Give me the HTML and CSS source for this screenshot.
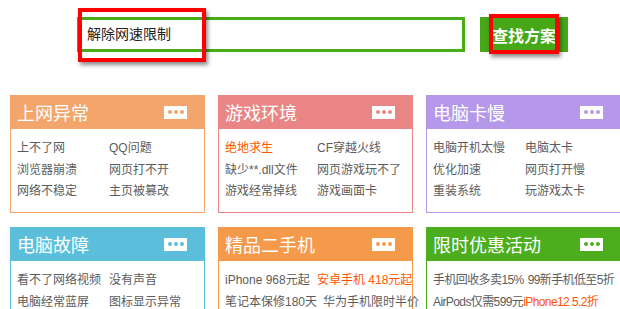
FILE: index.html
```html
<!DOCTYPE html>
<html lang="zh-CN">
<head>
    <meta charset="UTF-8">
    <meta name="viewport" content="width=device-width, initial-scale=1.0">
    <title>问题分类</title>
    <link rel="stylesheet" href="styles.css">
</head>
<body>

    <div class="search">
        <div class="search-input">解除网速限制</div>
        <button type="button" class="search-btn">查找方案</button>
        <span class="mark mark-input"></span>
        <span class="mark mark-btn"></span>
    </div>

    <div class="cards">
        <div class="card card-orange">
            <div class="card-head">
                <h3>上网异常</h3>
                <span class="more"><i></i><i></i><i></i></span>
            </div>
            <ul class="card-body">
                <li><a href="#">上不了网</a><a href="#">QQ问题</a></li>
                <li><a href="#">浏览器崩溃</a><a href="#">网页打不开</a></li>
                <li><a href="#">网络不稳定</a><a href="#">主页被篡改</a></li>
            </ul>
        </div>

        <div class="card card-red">
            <div class="card-head">
                <h3>游戏环境</h3>
                <span class="more"><i></i><i></i><i></i></span>
            </div>
            <ul class="card-body">
                <li><a href="#" class="hot">绝地求生</a><a href="#">CF穿越火线</a></li>
                <li><a href="#">缺少**.dll文件</a><a href="#">网页游戏玩不了</a></li>
                <li><a href="#">游戏经常掉线</a><a href="#">游戏画面卡</a></li>
            </ul>
        </div>

        <div class="card card-purple">
            <div class="card-head">
                <h3>电脑卡慢</h3>
                <span class="more"><i></i><i></i><i></i></span>
            </div>
            <ul class="card-body">
                <li><a href="#">电脑开机太慢</a><a href="#">电脑太卡</a></li>
                <li><a href="#">优化加速</a><a href="#">网页打开慢</a></li>
                <li><a href="#">重装系统</a><a href="#">玩游戏太卡</a></li>
            </ul>
        </div>

        <div class="card card-blue">
            <div class="card-head">
                <h3>电脑故障</h3>
                <span class="more"><i></i><i></i><i></i></span>
            </div>
            <ul class="card-body">
                <li><a href="#">看不了网络视频</a><a href="#">没有声音</a></li>
                <li><a href="#">电脑经常蓝屏</a><a href="#">图标显示异常</a></li>
            </ul>
        </div>

        <div class="card card-amber">
            <div class="card-head">
                <h3>精品二手机</h3>
                <span class="more"><i></i><i></i><i></i></span>
            </div>
            <ul class="card-body">
                <li><a href="#">iPhone 968元起</a><a href="#" class="hot">安卓手机 418元起</a></li>
                <li><a href="#">笔记本保修180天</a><a href="#">华为手机限时半价</a></li>
            </ul>
        </div>

        <div class="card card-green">
            <div class="card-head">
                <h3>限时优惠活动</h3>
                <span class="more"><i></i><i></i><i></i></span>
            </div>
            <ul class="card-body">
                <li><a href="#" class="tight">手机回收多卖15%</a><a href="#">99新手机低至5折</a></li>
                <li><a href="#" class="flush">AirPods仅需599元</a><a href="#" class="hot">iPhone12 5.2折</a></li>
            </ul>
        </div>
    </div>

</body>
</html>
```

FILE: styles.css
```css
body {
    margin: 0;
    font-family: "Liberation Sans", "Noto Sans CJK SC", sans-serif;
    background-color: #fff;
    overflow: hidden;
}

/* search bar */
.search {
    position: relative;
    display: flex;
    gap: 15px;
    padding: 17px 0 0 77px;
    height: 35px;
}

.search-input {
    box-sizing: border-box;
    width: 388px;
    height: 35px;
    border: 3px solid #47ad1a;
    padding-left: 7px;
    font-size: 14px;
    line-height: 29px;
    color: #222;
}

.search-btn {
    width: 88px;
    height: 35px;
    border: none;
    background-color: #45a816;
    color: #fff;
    font-family: "Noto Sans CJK SC", sans-serif;
    font-size: 16px;
    font-weight: bold;
    padding: 0;
}

/* red annotation boxes drawn over the bar */
.mark {
    position: absolute;
    box-sizing: border-box;
    border: 4px solid #f00;
    box-shadow: 2px 3px 4px rgba(0, 0, 0, 0.45);
}

.mark-input {
    left: 78px;
    top: 8px;
    width: 128px;
    height: 54px;
}

.mark-btn {
    left: 489px;
    top: 14px;
    width: 70px;
    height: 40px;
}

/* cards */
.cards {
    display: grid;
    grid-template-columns: repeat(3, 195px);
    column-gap: 13px;
    row-gap: 14px;
    margin: 43px 0 0 10px;
}

.card {
    --main: #f3a56b;
    box-sizing: border-box;
    height: 118px;
    border: 1px solid var(--main);
}

.card-orange { --main: #f3a56b; }
.card-red { --main: #ea8585; }
.card-purple { --main: #b698ea; }
.card-blue { --main: #5bbfdc; }
.card-amber { --main: #f5994b; }
.card-green { --main: #4cae1c; }

.card-head {
    display: flex;
    align-items: center;
    justify-content: space-between;
    height: 34px;
    margin: -1px -1px 0;
    padding: 0 18px 0 7px;
    background-color: var(--main);
}

.card-head h3 {
    margin: 0;
    font-family: "Noto Sans CJK SC", sans-serif;
    font-size: 18px;
    font-weight: normal;
    color: #fff;
}

.more {
    display: flex;
    justify-content: center;
    align-items: center;
    gap: 2px;
    width: 23px;
    height: 13px;
    background-color: #fff;
}

.more i {
    width: 4px;
    height: 4px;
    border-radius: 50%;
    background-color: var(--main);
}

.card-body {
    list-style: none;
    margin: 0;
    padding: 9px 0 0 6px;
}

.card-green .card-body {
    letter-spacing: -0.6px;
}

.card-body li {
    display: flex;
    height: 21.5px;
    line-height: 21.5px;
    white-space: nowrap;
}

.card-body a {
    flex-shrink: 0;
    font-size: 12px;
    color: #5c5c5c;
    text-decoration: none;
}

.card-body a:first-child {
    min-width: 86px;
    padding-right: 6px;
}

.card-body a.tight {
    padding-right: 4px;
}

.card-body a.flush {
    padding-right: 0;
}

.card-body a.hot {
    color: #ff5500;
}
```
